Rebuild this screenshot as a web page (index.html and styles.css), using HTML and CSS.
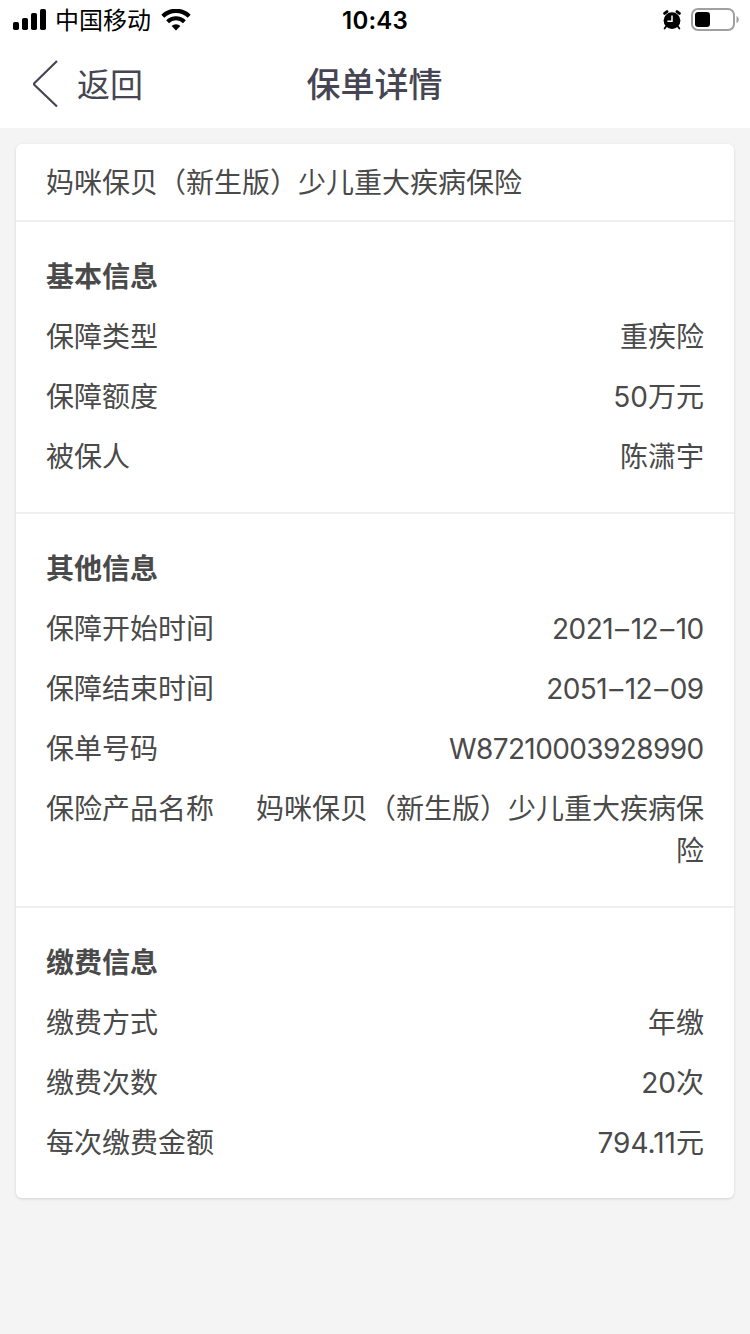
FILE: index.html
```html
<!DOCTYPE html>
<html lang="zh-CN">
<head>
<meta charset="utf-8">
<meta name="viewport" content="width=device-width, initial-scale=1">
<title>保单详情</title>
<link rel="stylesheet" href="styles.css">
</head>
<body>
<div class="status">
  <div class="status-left">
    <svg class="signal" width="34" height="22" viewBox="0 0 34 22">
      <rect x="0" y="13" width="6" height="8" rx="1.8"/>
      <rect x="9" y="9" width="6" height="12" rx="1.8"/>
      <rect x="18" y="4" width="6" height="17" rx="1.8"/>
      <rect x="27" y="0" width="6" height="21" rx="1.8"/>
    </svg>
    <span class="carrier">中国移动</span>
    <svg class="wifi" width="30" height="22" viewBox="0 0 30 22">
      <path d="M1.800 7.200a18.800 18.800 0 0 1 26.400 0" fill="none" stroke="#000" stroke-width="4.200"/>
      <path d="M6.600 12.700a12 12 0 0 1 16.800 0" fill="none" stroke="#000" stroke-width="4"/>
      <path d="M10.600 17a6.200 6.200 0 0 1 8.800 0L15 21.600z"/>
    </svg>
  </div>
  <div class="clock">10:43</div>
  <div class="status-right">
    <svg width="18" height="20" viewBox="0 0 18 20">
      <circle cx="9" cy="10.600" r="8.400"/>
      <path d="M1.600 3.400 4 1.600M16.400 3.400 14 1.600" stroke="#000" stroke-width="2.800" stroke-linecap="round"/>
      <path d="M3.400 16 1.600 18.600M14.600 16l1.800 2.600" stroke="#000" stroke-width="1.800" stroke-linecap="round"/>
      <path d="M9 5.400v5.800H4.400" fill="none" stroke="#fff" stroke-width="1.500"/>
    </svg>
    <svg width="48" height="24" viewBox="0 0 48 24">
      <rect x="1" y="1" width="42" height="21" rx="6" fill="none" stroke="#a0a0a0" stroke-width="2"/>
      <rect x="4" y="4" width="15" height="15" rx="3.200"/>
      <path d="M45.500 8c1.700.8 2.200 2 2.200 3.600s-.5 2.800-2.200 3.600z" fill="#a0a0a0"/>
    </svg>
  </div>
</div>
<header class="nav">
  <a class="back">
    <svg width="28" height="50" viewBox="0 0 28 50"><path d="M26 2 3.500 24Q2.500 25 3.500 26L26 47.500" fill="none" stroke="#464553" stroke-width="2.200"/></svg>
    <span>返回</span>
  </a>
  <h1 class="nav-title">保单详情</h1>
</header>
<main class="card">
  <div class="product">妈咪保贝（新生版）少儿重大疾病保险</div>
  <section class="group">
    <h2>基本信息</h2>
    <div class="row"><span>保障类型</span><span class="value">重疾险</span></div>
    <div class="row"><span>保障额度</span><span class="value">50万元</span></div>
    <div class="row"><span>被保人</span><span class="value">陈潇宇</span></div>
  </section>
  <section class="group">
    <h2>其他信息</h2>
    <div class="row"><span>保障开始时间</span><span class="value number">2021<span class="dash">–</span>12<span class="dash">–</span>10</span></div>
    <div class="row"><span>保障结束时间</span><span class="value number">2051<span class="dash">–</span>12<span class="dash">–</span>09</span></div>
    <div class="row"><span>保单号码</span><span class="value number">W87210003928990</span></div>
    <div class="row"><span>保险产品名称</span><span class="value">妈咪保贝（新生版）少儿重大疾病保险</span></div>
  </section>
  <section class="group">
    <h2>缴费信息</h2>
    <div class="row"><span>缴费方式</span><span class="value">年缴</span></div>
    <div class="row"><span>缴费次数</span><span class="value">20次</span></div>
    <div class="row"><span>每次缴费金额</span><span class="value">794.11元</span></div>
  </section>
</main>
</body>
</html>
```
FILE: styles.css
```css
* { box-sizing: border-box; }
body {
  margin: 0;
  min-height: 1334px;
  background: #f4f4f4;
  color: #4a4a4a;
  font: 28px/42px Inter, "Noto Sans CJK SC", sans-serif;
}
svg { display: block; flex: none; }
.status {
  display: grid;
  grid-template-columns: 1fr auto 1fr;
  align-items: center;
  height: 40px;
  padding: 0 11px 0 13px;
  background: #fff;
  color: #000;
}
.status-left, .status-right { display: flex; align-items: center; }
.status-left { line-height: 40px; }
.status-right { justify-content: flex-end; gap: 10px; }
.carrier { margin: 0 10px 0 8px; padding-top: 2px; font-size: 24px; line-height: 38px; }
.clock { margin-right: 2px; padding-top: 2px; font-size: 24px; font-weight: 600; line-height: 38px; letter-spacing: 0.2px; }
.nav {
  display: grid;
  grid-template-columns: 1fr auto 1fr;
  align-items: center;
  height: 88px;
  padding: 0 32px 0 31px;
  background: #fff;
  color: #464553;
}
.back { display: flex; align-items: center; gap: 18px; font-size: 33px; }
.back span { padding-top: 2px; }
.nav-title { margin: 0; padding-top: 2px; font-size: 34px; font-weight: 500; }
.card {
  margin: 16px;
  border-radius: 6px;
  background: #fff;
  box-shadow: 0 1px 3px rgba(0, 0, 0, 0.14);
}
.product { padding: 18px 30px 16px; }
.group {
  display: flex;
  flex-direction: column;
  gap: 18px;
  padding: 34px 30px;
}
.product, .group:not(:last-child) { border-bottom: 2px solid #f0f0f0; }
.group h2 { margin: 0; font-size: 28px; font-weight: 700; }
.row { display: flex; justify-content: space-between; }
.value { max-width: 450px; text-align: right; }
.number { margin-right: 0.4px; letter-spacing: -0.6px; }
.dash { margin: 0 2.2px; }
```
